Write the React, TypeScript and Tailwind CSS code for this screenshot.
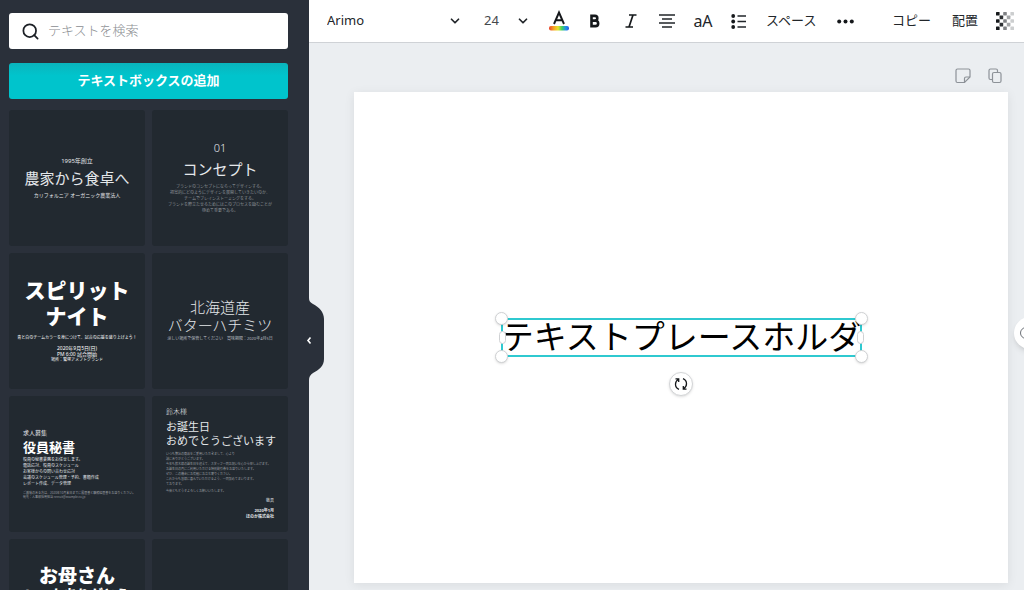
import type { ReactNode } from "react";
import { ChevronDown, Search } from "lucide-react";
import { clsx } from "clsx";

const TILE = "h-[136px] overflow-hidden rounded-[3px] bg-[#222930] flex flex-col justify-center whitespace-nowrap text-[#e4e7ea]";

function Tile({ children, className }: { children?: ReactNode; className?: string }) {
  return <button type="button" className={clsx(TILE, className)}>{children}</button>;
}

function ToolButton({ label, children, className }: { label: string; children: ReactNode; className?: string }) {
  return (
    <button type="button" aria-label={label} className={clsx("flex h-9 w-9 shrink-0 items-center justify-center", className)}>
      {children}
    </button>
  );
}

function Templates() {
  return (
    <div className="mt-[11px] grid grid-cols-2 gap-[7px]">
      <Tile className="items-center">
        <span className="text-[6px] leading-[10px]">1995年創立</span>
        <span className="text-[15px] leading-[24px]">農家から食卓へ</span>
        <span className="text-[5px] leading-[10px]">カリフォルニア オーガニック農業法人</span>
      </Tile>

      <Tile className="items-center">
        <span className="text-[11px] leading-[12px] font-light">01</span>
        <span className="text-[15px] leading-[30px]">コンセプト</span>
        <span className="text-[4px] leading-[6px] text-[#8b9096]">
          ブランドのコンセプトにならってデザインする。<br />
          視覚的にどのようにデザインを展開していきたいのか、<br />
          チームでブレインストーミングをする。<br />
          ブランドを際立たせるためにはこのプロセスを踏むことが<br />
          極めて重要である。
        </span>
      </Tile>

      <Tile className="items-center pb-[2px] text-white">
        <span className="text-[21px] leading-[26px] font-black">スピリット</span>
        <span className="text-[21px] leading-[26px] font-black">ナイト</span>
        <span className="mt-[2px] text-[4px] leading-[14px]">青と白のチームカラーを身につけて、試合の応援を盛り上げよう！</span>
        <span className="text-[5px] leading-[6px]">2020年9月5日(日)</span>
        <span className="text-[5px] leading-[6px]">PM 6:00 試合開始</span>
        <span className="text-[4px] leading-[6px]">場所：鷲塚アメフトグランド</span>
      </Tile>

      <Tile className="items-center">
        <span className="text-[15px] leading-[18px] font-light">北海道産<br />バターハチミツ</span>
        <span className="text-[4px] leading-[10px] text-[#b9bdc1]">涼しい場所で保管してください　賞味期限：2020年4月5日</span>
      </Tile>

      <Tile className="items-start pl-[14px] text-left">
        <span className="text-[6px] leading-[8px]">求人募集</span>
        <span className="text-[13px] leading-[20px] font-bold text-white">役員秘書</span>
        <span className="text-[4px] leading-[6px]">
          役員の秘書業務をお任せします。<br />
          電話応対、役員のスケジュール<br />
          お客様からの問い合わせ応対<br />
          会議のスケジュール管理・予約、書類作成<br />
          レポート作成、データ管理
        </span>
        <span className="mt-[4px] text-[3px] leading-[4px] text-[#9a9ea3]">
          ご興味のある方は、2020年10月末日までに履歴書と職務経歴書をお送りください。<br />
          宛先：人事部採用担当 recruit@example.co.jp
        </span>
      </Tile>

      <Tile className="items-start px-[14px] text-left">
        <span className="text-[7px] leading-[8px] font-light">鈴木様</span>
        <span className="mt-[4px] text-[11px] leading-[14px]">お誕生日<br />おめでとうございます</span>
        <span className="mt-[4px] text-[3px] leading-[5px] text-[#9a9ea3]">
          　いつも弊社の商品をご愛用いただきまして、心より<br />
          誠にありがとうございます。<br />
          今年も鈴木様の誕生日を迎えて、スタッフ一同お祝いを心から申し上げます。<br />
          お誕生日の月にご利用いただける特別割引券をお送りいたします。<br />
          ぜひ、この機会にお気軽にお立ち寄りください。<br />
          これからも皆様に喜んでいただけるよう、一同努めてまいります。<br />
          ております。
        </span>
        <span className="mt-[2px] text-[3px] leading-[5px] text-[#9a9ea3]">今後ともどうぞよろしくお願いいたします。</span>
        <span className="mt-[4px] self-end text-[4px] leading-[6px]">敬具</span>
        <span className="mt-[4px] self-end text-right text-[4px] leading-[6px] font-bold">2020年1月<br />ほのか株式会社</span>
      </Tile>

      <Tile className="items-center justify-start pt-[26px] text-white">
        <span className="text-[19px] leading-[22px] font-black">お母さん</span>
        <span className="text-[13px] leading-[14px] font-black">いつもありがとう</span>
      </Tile>

      <Tile />
    </div>
  );
}

function Sidebar() {
  return (
    <aside className="relative z-10 w-[309px] shrink-0 bg-[#2a303a] pt-[13px] pr-[21px] pl-[9px]">
      <label className="flex h-9 items-center gap-2 rounded-[3px] bg-white pl-3">
        <Search size={19} strokeWidth={2.2} className="text-[#1c2026]" />
        <input
          type="search"
          aria-label="テキストを検索"
          placeholder="テキストを検索"
          className="min-w-0 flex-1 text-[13px] font-light outline-none placeholder:text-[#8a8d91]"
        />
      </label>
      <button type="button" className="mt-[14px] h-9 w-full rounded-[3px] bg-linear-to-b from-[#0ab4bc] to-[#00c4cc] to-35% text-[13px] font-bold text-white">
        テキストボックスの追加
      </button>

      <Templates />

      {/* Collapse tab */}
      <button type="button" aria-label="パネルを閉じる" className="absolute top-[298px] left-[301px] h-[82px] w-[23px]">
        <svg viewBox="0 0 23 82" className="h-full w-full">
          <path d="M7 0h1c0 3 1 4 4 6 6 3 11 8 11 15v40c0 7-5 11-11 14-3 2-4 4-4 7H7z" fill="#2a303a" />
          <path d="M9.500 39.500 7 42.500l2.500 3" fill="none" stroke="#fff" strokeWidth="1.600" />
        </svg>
      </button>
    </aside>
  );
}

// filled cells of the transparency grid: column, row
const CHECKS = [
  [0, 0], [2, 0], [4, 0], [1, 1], [3, 1], [0, 2], [2, 2], [4, 2], [1, 3], [3, 3], [0, 4], [2, 4], [4, 4],
];
const CHECK_FILL = ["#15181b", "#2e3134", "#808285", "#a3a5a7", "#cccecf"];

function Toolbar() {
  return (
    <header className="flex h-[43px] shrink-0 items-center border-b border-[#cfd2d6] bg-white pr-[10px] pl-[18px] text-[13px] text-[#22262a]">
      <label className="relative flex w-[135px] items-center">
        <select aria-label="フォント" className="w-full appearance-none outline-none">
          <option>Arimo</option>
        </select>
        <ChevronDown size={14} strokeWidth={3} className="pointer-events-none absolute right-0" />
      </label>
      <label className="relative ml-[22px] flex w-[46px] items-center">
        <select aria-label="フォントサイズ" className="w-full appearance-none text-[#44484c] outline-none">
          <option>24</option>
        </select>
        <ChevronDown size={14} strokeWidth={3} className="pointer-events-none absolute right-0" />
      </label>

      <ToolButton label="テキストの色" className="ml-[11px]">
        <svg width="20" height="22" viewBox="0 0 20 22">
          <defs>
            <linearGradient id="hue">
              <stop offset="0" stopColor="#e8442e" />
              <stop offset=".25" stopColor="#f7a823" />
              <stop offset=".45" stopColor="#e3e32c" />
              <stop offset=".65" stopColor="#3fd063" />
              <stop offset=".85" stopColor="#1f8ff0" />
              <stop offset="1" stopColor="#2a5be0" />
            </linearGradient>
          </defs>
          <path d="M5 14 10 2.500 15 14M6.800 10.300h6.400" fill="none" stroke="#15181b" strokeWidth="1.900" />
          <rect x="0" y="16" width="20" height="4.500" rx="2" fill="url(#hue)" />
        </svg>
      </ToolButton>
      <ToolButton label="太字">
        <svg width="12" height="14" viewBox="0 0 12 14">
          <path d="M2.500 1.900H6a2.300 2.300 0 0 1 0 4.600H2.500zM2.500 6.800h4a2.600 2.600 0 0 1 0 5.300h-4z" fill="none" stroke="#15181b" strokeWidth="2.600" />
        </svg>
      </ToolButton>
      <ToolButton label="斜体">
        <svg width="12" height="14" viewBox="0 0 12 14">
          <path d="M4 1h7.500M.5 13H8M8 1 4 13" fill="none" stroke="#15181b" strokeWidth="1.700" />
        </svg>
      </ToolButton>
      <ToolButton label="文字揃え">
        <svg width="16" height="14" viewBox="0 0 16 14">
          <path d="M0 1h16M3 5h10M0 9h16M3 13h10" stroke="#22262a" strokeWidth="1.600" />
        </svg>
      </ToolButton>
      <ToolButton label="大文字" className="text-[16px]">aA</ToolButton>
      <ToolButton label="リスト">
        <svg width="16" height="15" viewBox="0 0 16 15">
          <g fill="#15181b">
            <circle cx="2.200" cy="2" r="1.900" />
            <circle cx="2.200" cy="7.500" r="1.900" />
            <circle cx="2.200" cy="13" r="1.900" />
          </g>
          <path d="M6.500 2h8.500M6.500 7.500h8.500M6.500 13h8.500" stroke="#22262a" strokeWidth="1.600" />
        </svg>
      </ToolButton>
      <button type="button" className="ml-[9px] shrink-0">スペース</button>
      <ToolButton label="その他" className="ml-[11px]">
        <svg width="17" height="5" viewBox="0 0 17 5" fill="#15181b">
          <circle cx="2.200" cy="2.500" r="2" />
          <circle cx="8.500" cy="2.500" r="2" />
          <circle cx="14.800" cy="2.500" r="2" />
        </svg>
      </ToolButton>

      <div className="ml-auto flex shrink-0 items-center">
        <button type="button">コピー</button>
        <button type="button" className="ml-[21px]">配置</button>
        <button type="button" aria-label="透明度" className="ml-[18px]">
          <svg width="18" height="18" viewBox="0 0 18 18" className="block">
            {CHECKS.map(([col, row]) => (
              <rect key={`${col}-${row}`} x={col * 3.6} y={row * 3.6} width="3.600" height="3.600" rx=".6" fill={CHECK_FILL[col]} />
            ))}
          </svg>
        </button>
      </div>
    </header>
  );
}

const CORNER = "absolute h-[13px] w-[13px] rounded-full border border-[#cfd1d3] bg-white shadow-sm";
const SIDE = "absolute top-[11px] h-[13px] w-[7px] rounded-full border border-[#cfd1d3] bg-white";

function SelectedText() {
  return (
    <div className="relative h-[39px] w-[363px]">
      <input
        type="text"
        aria-label="テキスト"
        defaultValue="テキストプレースホルダ"
        className="block h-full w-full bg-transparent pb-1 text-center text-[33px] leading-[35px] text-black outline-none"
      />
      <div className="pointer-events-none absolute inset-x-px inset-y-0 border-2 border-[#2fc9d0]">
        <span className={clsx(CORNER, "-top-2 -left-2")} />
        <span className={clsx(CORNER, "-top-2 -right-2")} />
        <span className={clsx(CORNER, "-bottom-2 -left-2")} />
        <span className={clsx(CORNER, "-right-2 -bottom-2")} />
        <span className={clsx(SIDE, "-left-1")} />
        <span className={clsx(SIDE, "-right-1")} />
      </div>
      <button
        type="button"
        aria-label="回転"
        className="absolute top-[54px] left-1/2 flex h-6 w-6 -translate-x-1/2 items-center justify-center rounded-full border border-[#d3d5d7] bg-white shadow-sm"
      >
        <svg width="14" height="14" viewBox="0 0 14 14" fill="none" stroke="#15181b" strokeWidth="1.300">
          <path d="M5 12.300C2.900 11.500 1.500 9.500 1.500 7.200c0-2 1-3.700 2.700-4.700M1.500 1.800h3.200v3.200" />
          <path d="M9 1.700c2.100.8 3.500 2.800 3.500 5.100 0 2-1 3.700-2.700 4.700M12.500 12.200H9.300V9" />
        </svg>
      </button>
    </div>
  );
}

function Canvas() {
  return (
    <main className="relative min-h-0 flex-1 overflow-hidden bg-[#ebeef1] pr-4 pl-[45px]">
      <div className="flex h-[49px] items-end justify-end gap-4 pr-[5px] pb-2 text-[#8d9298]">
        <button type="button" aria-label="メモを追加">
          <svg width="16" height="16" viewBox="0 0 16 16" fill="none" stroke="currentColor" strokeWidth="1.200" className="block">
            <path d="M2.500 1h11A1.500 1.500 0 0 1 15 2.500V9l-5.500 5.500h-7A1.500 1.500 0 0 1 1 13V2.500A1.500 1.500 0 0 1 2.500 1z" />
            <path d="M15 9h-4a1.500 1.500 0 0 0-1.500 1.500v4" />
          </svg>
        </button>
        <button type="button" aria-label="ページを複製">
          <svg width="16" height="16" viewBox="0 0 16 16" fill="none" stroke="currentColor" strokeWidth="1.200" className="block">
            <rect x="5.500" y="4.500" width="8.500" height="10" rx="1.500" />
            <path d="M5.500 11.500h-2A1.500 1.500 0 0 1 2 10V2.500A1.500 1.500 0 0 1 3.500 1H9a1.500 1.500 0 0 1 1.500 1.500v2" />
          </svg>
        </button>
      </div>
      <section className="flex aspect-4/3 items-center justify-center bg-white shadow-[0_2px_10px_rgba(20,25,30,0.08)]">
        <SelectedText />
      </section>
      <button
        type="button"
        aria-label="コメント"
        className="absolute top-[274px] -right-[22px] flex h-8 w-8 items-center rounded-full bg-white pl-[6px] shadow-md"
      >
        <span className="h-3 w-3 rounded-full border border-[#6d7278]" />
      </button>
    </main>
  );
}

export default function App() {
  return (
    <div lang="ja" className="flex h-screen overflow-hidden font-['Noto_Sans','Noto_Sans_CJK_JP',sans-serif]">
      <Sidebar />
      <div className="flex min-w-0 flex-1 flex-col">
        <Toolbar />
        <Canvas />
      </div>
    </div>
  );
}
